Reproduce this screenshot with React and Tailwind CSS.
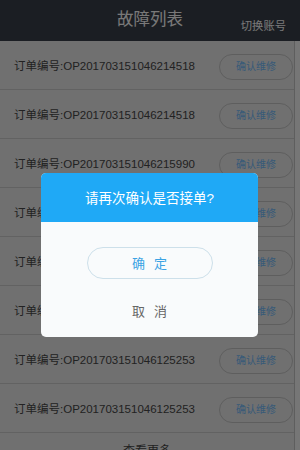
import React from "react";

const orders = [
  "OP201703151046214518",
  "OP201703151046214518",
  "OP201703151046215990",
  "OP201703151046215990",
  "OP201703151046215990",
  "OP201703151046215990",
  "OP201703151046125253",
  "OP201703151046125253",
];

export default function App() {
  const font = { fontFamily: '"Liberation Sans", "Noto Sans CJK SC", sans-serif' };
  return (
    <div className="relative w-[300px] h-[450px] overflow-hidden bg-[#e0e0e0]" style={font}>
      <header className="relative h-[41px] bg-[#363c46] flex items-center justify-center">
        <span className="text-[16.5px] text-[#f2f2f2] leading-none mt-[-2px]">故障列表</span>
        <span className="absolute right-[14px] top-[21px] text-[11.3px] text-[#f2f2f2] leading-none">切换账号</span>
      </header>
      <div className="flex">
        <div className="flex-1 flex flex-col">
          {orders.map((o, i) => (
            <div key={i} className="h-[49px] shrink-0 flex items-center justify-between pl-[14px] pr-[1px] border-b border-[#c4c4c4]">
              <span className="text-[11.5px] text-[#444] leading-none mt-[4px]">订单编号:{o}</span>
              <button className="w-[74px] h-[26px] mt-[4px] rounded-full border border-[#bdbdbd] text-[10px] text-[#6fb4f0] leading-none">确认维修</button>
            </div>
          ))}
          <div className="h-[20px] flex justify-center">
            <span className="text-[12px] text-[#444] mt-[12px] leading-none">查看更多</span>
          </div>
        </div>
        <div className="w-[6px] border-l border-[#bcbcbc] bg-[#ececec]" />
      </div>

      <div className="absolute inset-0 bg-black/50" />

      <div className="absolute left-[41px] top-[173px] w-[217px] h-[164px] rounded-[5px] overflow-hidden bg-[#f9fbfc] flex flex-col">
        <div className="h-[49px] bg-[#1fa9f6] flex items-center justify-center">
          <span className="text-[13.5px] text-white leading-none mt-[2px]">请再次确认是否接单?</span>
        </div>
        <div className="flex flex-col items-center">
          <button className="mt-[25px] w-[126px] h-[32px] rounded-full border border-[#cde0ea] flex items-center justify-center pl-[9px] text-[13px] text-[#3ba3e4] leading-none tracking-[9px]">
            确定
          </button>
          <button className="mt-[26px] flex items-center justify-center pl-[9px] text-[13px] text-[#666] leading-none tracking-[9px]">
            取消
          </button>
        </div>
      </div>
    </div>
  );
}
